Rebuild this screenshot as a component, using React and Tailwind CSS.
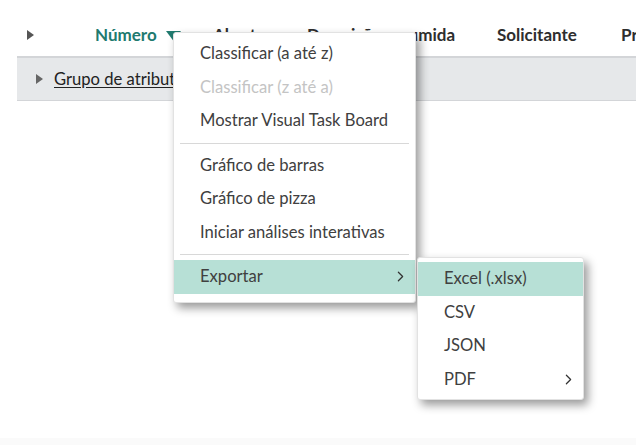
import { ChevronRight } from "lucide-react";

const font = { fontFamily: "Lato, 'Open Sans', sans-serif" };

function Caret({ className }) {
  return (
    <svg width="7" height="10" viewBox="0 0 7 10" className={className}>
      <path d="M0 0 L7 5 L0 10 Z" fill="currentColor" />
    </svg>
  );
}

function Item({ children, disabled, active, arrow }) {
  return (
    <div
      className={`flex items-center justify-between h-[33.5px] pl-[26px] pr-[6px] ${
        active ? "bg-[#b7e0d6]" : ""
      } ${disabled ? "text-[#c4c4c4]" : "text-[#404040]"}`}
    >
      <span>{children}</span>
      {arrow && <ChevronRight size={17} strokeWidth={1.75} className="text-[#333]" />}
    </div>
  );
}

export default function App() {
  return (
    <div className="relative w-[636px] h-[445px] bg-white overflow-hidden text-[16.6px]" style={font}>
      {/* header row */}
      <div className="flex items-center h-[56px] pt-[14px] font-bold text-[17px] text-[#2e2e2e] whitespace-nowrap">
        <div className="w-[95px] shrink-0 pl-[27px]">
          <Caret className="text-[#555]" />
        </div>
        <div className="w-[118px] shrink-0 flex items-center text-[#217a6f]">
          Número
          <svg width="15" height="10" viewBox="0 0 15 10" className="ml-[9px] mt-[1px]">
            <path d="M0 0 L15 0 L7.5 10 Z" fill="#217a6f" />
          </svg>
        </div>
        <div className="w-[94px] shrink-0">Aberto</div>
        <div className="w-[190px] shrink-0">Descrição resumida</div>
        <div className="w-[124px] shrink-0">Solicitante</div>
        <div className="shrink-0">Prioridade</div>
      </div>

      {/* group row */}
      <div className="ml-[17px] h-[45px] bg-[#e6e8ea] border-t-2 border-b border-[#d3d5d8] flex items-center pl-[19px] text-[#222]">
        <Caret className="text-[#666] mr-[11px]" />
        <span className="underline underline-offset-2">Grupo de atributos</span>
      </div>

      <div className="absolute left-0 right-0 bottom-0 h-[7px] bg-[#fafafa]" />

      {/* main menu */}
      <div className="absolute left-[173px] top-[32px] w-[243px] bg-white rounded-[3px] border border-[#e2e2e2] shadow-[4px_5px_10px_rgba(0,0,0,0.4)] pt-[4px] pb-[8px]">
        <Item>Classificar (a até z)</Item>
        <Item disabled>Classificar (z até a)</Item>
        <Item>Mostrar Visual Task Board</Item>
        <div className="mx-[6px] my-[5px] border-t border-[#d8d8d8]" />
        <Item>Gráfico de barras</Item>
        <Item>Gráfico de pizza</Item>
        <Item>Iniciar análises interativas</Item>
        <div className="mx-[6px] my-[5px] border-t border-[#d8d8d8]" />
        <Item active arrow>
          Exportar
        </Item>
      </div>

      {/* submenu */}
      <div className="absolute left-[417px] top-[257px] w-[167px] bg-white rounded-[3px] border border-[#e2e2e2] shadow-[4px_5px_10px_rgba(0,0,0,0.4)] pt-[4px] pb-[3px]">
        <Item active>Excel (.xlsx)</Item>
        <Item>CSV</Item>
        <Item>JSON</Item>
        <Item arrow>PDF</Item>
      </div>
    </div>
  );
}
